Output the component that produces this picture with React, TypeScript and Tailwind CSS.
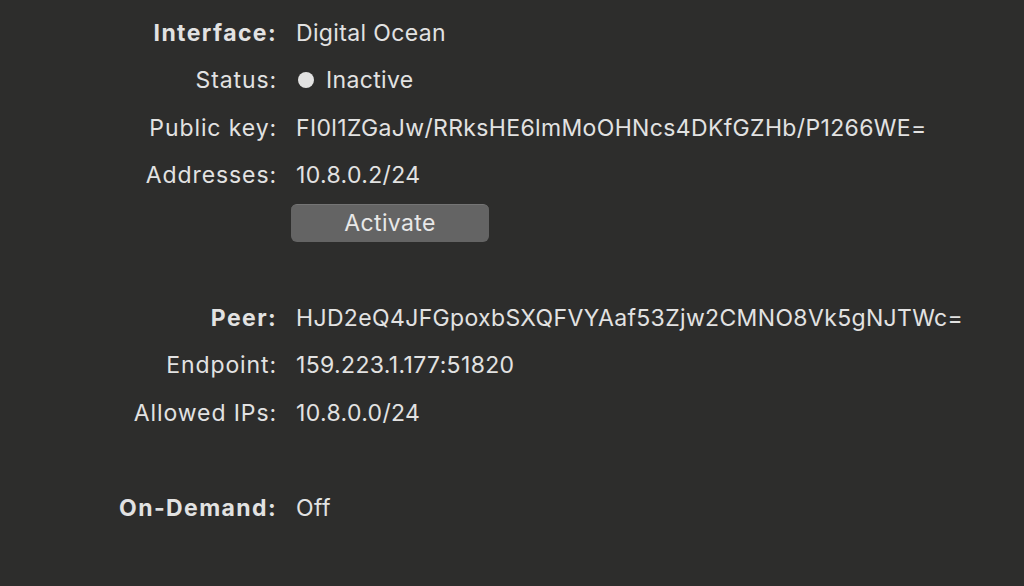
import React from "react";

const rows: Array<{ label?: string; value?: React.ReactNode; bold?: boolean; button?: boolean }> = [
  { label: "Interface:", value: "Digital Ocean", bold: true },
  {
    label: "Status:",
    value: (
      <span className="flex items-center gap-[12px]">
        <span className="inline-block w-[16px] h-[16px] rounded-full bg-[#e2e2e2] ml-[2px]" />
        <span>Inactive</span>
      </span>
    ),
  },
  { label: "Public key:", value: "FI0l1ZGaJw/RRksHE6lmMoOHNcs4DKfGZHb/P1266WE=" },
  { label: "Addresses:", value: "10.8.0.2/24" },
  { button: true },
  {},
  { label: "Peer:", value: "HJD2eQ4JFGpoxbSXQFVYAaf53Zjw2CMNO8Vk5gNJTWc=", bold: true },
  { label: "Endpoint:", value: "159.223.1.177:51820" },
  { label: "Allowed IPs:", value: "10.8.0.0/24" },
  {},
  { label: "On-Demand:", value: "Off", bold: true },
];

export default function App() {
  return (
    <div
      className="w-[1024px] h-[586px] bg-[#2d2d2c] text-[#e2e2e2] pt-[9px] overflow-hidden"
      style={{ fontFamily: 'Inter, "Liberation Sans", sans-serif' }}
    >
      {rows.map((r, i) => (
        <div key={i} className="flex items-center h-[47.5px] text-[23px]">
          <div
            className={`w-[277px] text-right ${r.bold ? "font-bold tracking-[1.4px]" : "tracking-[0.9px]"}`}
          >
            {r.label}
          </div>
          <div className="flex items-center tracking-[0.35px] ml-[19px]">
            {r.button ? (
              <button className="ml-[-5px] w-[198px] h-[38px] rounded-[6px] bg-[#646464] border-t border-[#757575] text-[#e8e8e8] text-[23px] tracking-[0.35px] flex items-center justify-center">
                Activate
              </button>
            ) : (
              r.value
            )}
          </div>
        </div>
      ))}
    </div>
  );
}
